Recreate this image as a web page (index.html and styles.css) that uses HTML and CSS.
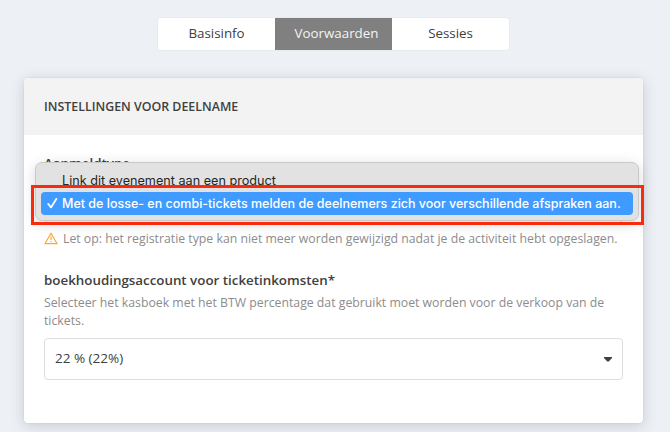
FILE: index.html
```html
<!DOCTYPE html>
<html lang="nl">
<head>
    <meta charset="UTF-8">
    <title>Voorwaarden</title>
    <link rel="stylesheet" href="styles.css">
</head>
<body>
    <div class="tabs">
        <div class="tab">Basisinfo</div>
        <div class="tab active">Voorwaarden</div>
        <div class="tab">Sessies</div>
    </div>
    <div class="card">
        <div class="card-header">INSTELLINGEN VOOR DEELNAME</div>
        <div class="card-body">
            <div class="label">Aanmeldtype</div>
            <div class="select-wrapper">
                <div class="select"></div>
                <!-- Geopend menu boven de select -->
                <div class="menu">
                    <div class="option">Link dit evenement aan een product</div>
                    <div class="option selected">
                        <svg class="check" viewBox="0 0 12 12" width="12" height="12">
                            <path d="M1.2 6.9 L4 10.4 L9.3 2" fill="none" stroke="#fff" stroke-width="1.8" stroke-linecap="round" stroke-linejoin="round"/>
                        </svg>
                        Met de losse- en combi-tickets melden de deelnemers zich voor verschillende afspraken aan.
                    </div>
                </div>
                <div class="highlight"></div>
            </div>
            <div class="note">
                <svg class="warning" viewBox="0 0 14 13" width="14" height="13">
                    <path d="M7 1.2 L13.1 11.7 H0.9 Z" fill="none" stroke="#f9a937" stroke-width="1.2" stroke-linejoin="round"/>
                    <path d="M7 4.6 V8.1 M7 9.1 V10.3" fill="none" stroke="#f9a937" stroke-width="1.2"/>
                </svg>
                Let op: het registratie type kan niet meer worden gewijzigd nadat je de activiteit hebt opgeslagen.
            </div>
            <div class="label account">boekhoudingsaccount voor ticketinkomsten*</div>
            <div class="help">Selecteer het kasboek met het BTW percentage dat gebruikt moet worden voor de verkoop van de<br>tickets.</div>
            <div class="select">
                <span class="select-text">22 % (22%)</span>
                <svg viewBox="0 0 8 5" width="8" height="5"><path d="M0 0 H8 V1 L4.7 4.5 H3.3 L0 1 Z" fill="#404040"/></svg>
            </div>
        </div>
    </div>
</body>
</html>
```
FILE: styles.css
```css
* {
    box-sizing: border-box;
}
body {
    margin: 0;
    height: 432px;
    overflow: hidden;
    background: #edf0f5;
    color: #404040;
    font-family: "Open Sans", sans-serif;
    font-size: 13.35px;
}
.tabs {
    display: flex;
    width: 353px;
    height: 34px;
    margin: 17px 0 0 157px;
    background: white;
    border: 1px solid #e8ebee;
    border-radius: 4px;
    overflow: hidden;
}
.tab {
    flex: none;
    width: 117px;
    display: flex;
    align-items: center;
    justify-content: center;
    padding-bottom: 2px;
}
.tab.active {
    padding-left: 6px;
    background: #808080;
    color: #f4f4f4;
}
.card {
    width: 619px;
    height: 345px;
    margin: 27px 0 0 24px;
    background: white;
    border-radius: 4px;
    box-shadow: 0 3px 14px rgba(70, 85, 100, 0.22), 0 0 2px rgba(70, 85, 100, 0.15);
}
.card-header {
    display: flex;
    align-items: center;
    height: 57px;
    padding: 0 20px;
    background: #f3f3f3;
    border-radius: 4px 4px 0 0;
    font-size: 12.4px;
    font-weight: 600;
}
.card-body {
    padding: 18px 20px 0;
}
.label {
    height: 20px;
    line-height: 20px;
    font-weight: 600;
    white-space: nowrap;
}
.select-wrapper {
    position: relative;
    margin-top: 8px;
}
.select {
    display: flex;
    align-items: center;
    justify-content: space-between;
    height: 42px;
    padding: 0 10px;
    border: 1px solid #dedede;
    border-radius: 4px;
}
.select-text {
    padding-bottom: 2px;
    font-size: 13.5px;
}
.menu {
    position: absolute;
    top: -19px;
    left: -9px;
    width: 604px;
    height: 59px;
    padding: 5px;
    background: #e2e2e2;
    border: 1px solid #c9c9c9;
    border-radius: 7px;
    box-shadow: 0 3px 14px rgba(0, 0, 0, 0.16);
    color: #262626;
    font-family: Inter, sans-serif;
    font-size: 12.65px;
    white-space: nowrap;
}
.option {
    display: flex;
    align-items: center;
    height: 23px;
    padding: 1px 0 0 21px;
}
.option.selected {
    margin-top: 1px;
    padding: 0 0 1px 6px;
    background: #3f9bff;
    border-radius: 4px;
    color: white;
    font-size: 12.5px;
    font-weight: 500;
}
.check {
    flex: none;
    margin-right: 3px;
}
.highlight {
    position: absolute;
    top: 4px;
    left: -13px;
    width: 613px;
    height: 40px;
    border: 3px solid #fa2a0c;
}
.note {
    display: flex;
    align-items: center;
    height: 20px;
    margin-top: 5px;
    color: #8c8c8c;
    font-size: 12.27px;
    white-space: nowrap;
}
.warning {
    flex: none;
    margin-right: 5px;
}
.account {
    margin-top: 22px;
}
.help {
    height: 36px;
    margin: 4px 0 8px;
    color: #8c8c8c;
    font-size: 12.27px;
    line-height: 18px;
    white-space: nowrap;
}
```
